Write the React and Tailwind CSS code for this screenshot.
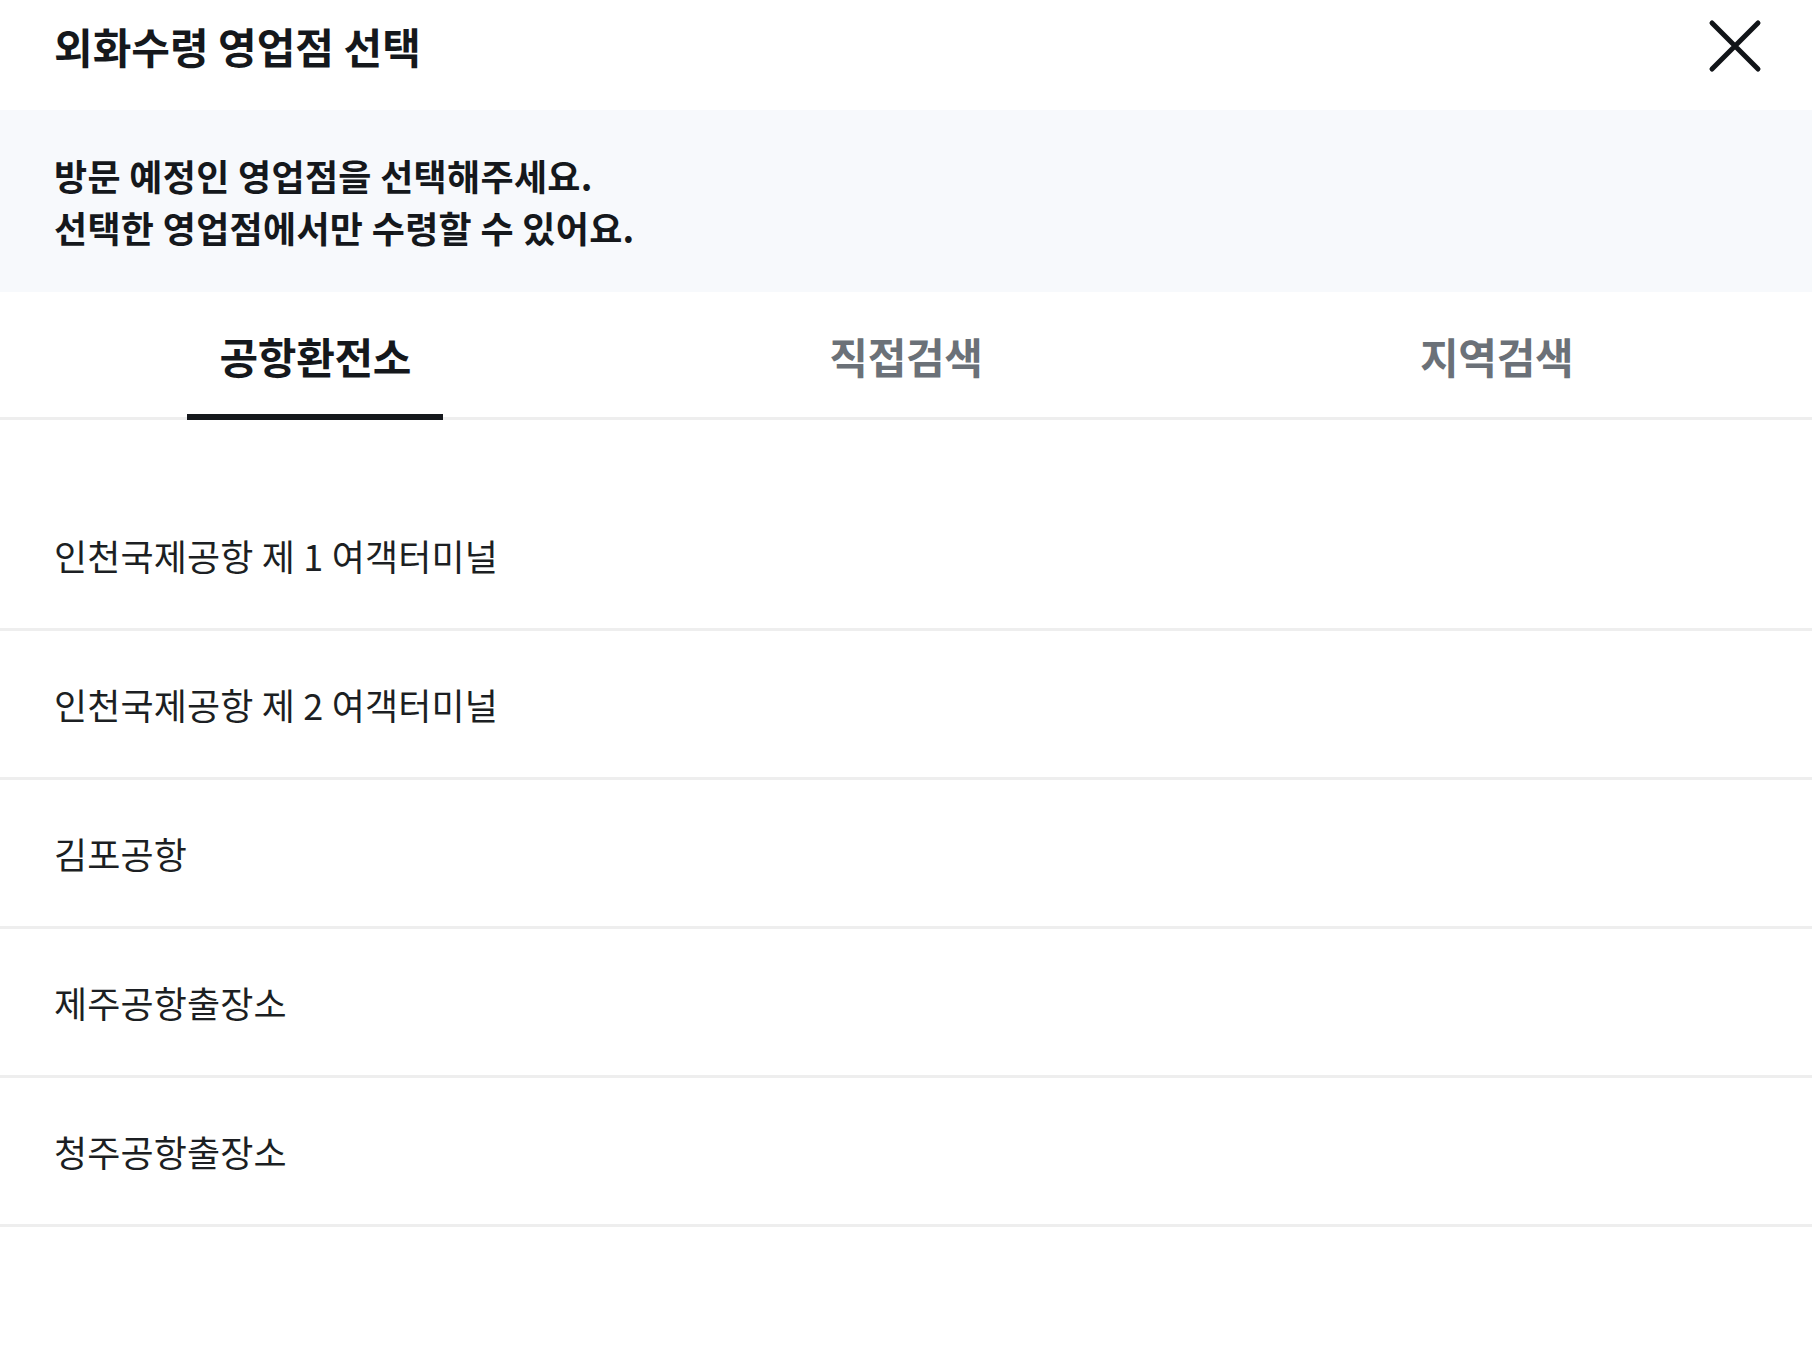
import React, { useState } from 'react';

const FONT = { fontFamily: '"Noto Sans CJK KR", "Noto Sans", sans-serif' };

const tabs = ['공항환전소', '직접검색', '지역검색'];

const branches = [
  '인천국제공항 제 1 여객터미널',
  '인천국제공항 제 2 여객터미널',
  '김포공항',
  '제주공항출장소',
  '청주공항출장소',
];

function CloseIcon() {
  return (
    <svg width="56" height="56" viewBox="0 0 56 56" fill="none">
      <path d="M5 5L51 51M51 5L5 51" stroke="#111418" strokeWidth="5" strokeLinecap="round" />
    </svg>
  );
}

export default function App() {
  const [active, setActive] = useState(0);

  return (
    <div className="w-[1812px] min-h-[1345px] bg-white text-[#15181c]" style={FONT}>
      {/* Header */}
      <div className="h-[92px] mb-[18px] flex items-center justify-between pl-[54px] pr-[49px]">
        <h1 className="text-[42px] font-bold tracking-[0px] leading-none">외화수령 영업점 선택</h1>
        <button className="flex items-center justify-center">
          <CloseIcon />
        </button>
      </div>

      {/* Notice */}
      <div className="h-[182px] bg-[#f7f9fc] flex flex-col justify-center px-[54px]">
        <p className="text-[36px] font-semibold tracking-[0.3px] leading-[52px]">방문 예정인 영업점을 선택해주세요.</p>
        <p className="text-[36px] font-semibold tracking-[0.3px] leading-[52px]">선택한 영업점에서만 수령할 수 있어요.</p>
      </div>

      {/* Tabs */}
      <div className="grid grid-cols-3 px-5 border-b-[3px] border-[#eeeeee]">
        {tabs.map((tab, i) => (
          <div key={tab} className="flex justify-center">
            <button
              onClick={() => setActive(i)}
              className={`h-[128px] -mb-[3px] pt-1 px-8 flex items-center border-b-[6px] text-[42px] font-bold tracking-[-0.3px] ${
                i === active ? 'border-[#15181c] text-[#15181c]' : 'border-transparent text-[#6b7178]'
              }`}
            >
              {tab}
            </button>
          </div>
        ))}
      </div>

      {/* Branch list */}
      <ul className="pt-[62px]">
        {branches.map((name) => (
          <li
            key={name}
            className="h-[149px] flex items-center px-[54px] border-b-[3px] border-[#eeeeee] text-[36px] tracking-[0.15px] text-[#1c1f23]"
          >
            {name}
          </li>
        ))}
      </ul>
    </div>
  );
}
